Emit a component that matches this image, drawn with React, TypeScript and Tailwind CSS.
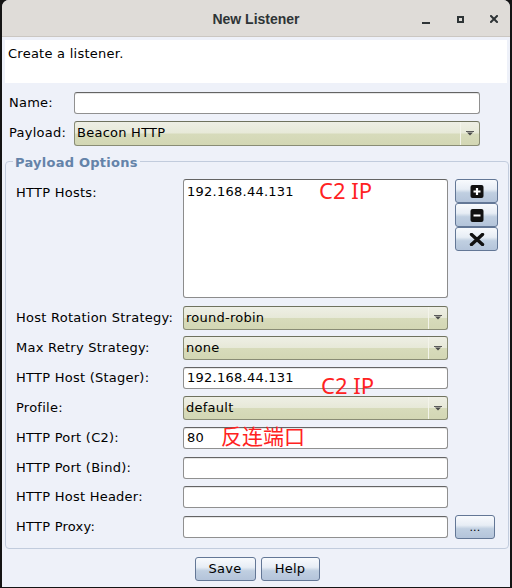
import React from "react";

const TXT = "font-['DejaVu_Sans',sans-serif] text-[13px] tracking-[0.25px] text-black";

function TextInput({ value = "", w }: { value?: string; w: string }) {
  return (
    <div
      className={`${w} h-[22px] bg-white border border-[#909090] border-t-[#646464] rounded-[3px] pl-[3px] flex items-center shadow-[inset_0_1px_0_#e6e6e6] ${TXT}`}
    >
      {value}
    </div>
  );
}

function Combo({ value, w, h = "h-[24px]" }: { value: string; w: string; h?: string }) {
  return (
    <div
      className={`${w} ${h} rounded-[3px] border border-[#898c75] border-t-[#6f725e] bg-[linear-gradient(to_bottom,#eeefe5_0%,#e7e9d8_48%,#d7dbbb_52%,#d3d7b4_100%)] flex items-stretch ${TXT}`}
    >
      <div className="flex-1 pl-[2px] flex items-center">{value}</div>
      <div className="w-[19px] border-l border-[#f3f4ea] flex items-center justify-center">
        <svg width="8" height="5" viewBox="0 0 8 5">
          <rect x="0" y="0" width="8" height="1" fill="#5a5a5a" />
          <path d="M1 1.5 L7 1.5 L4 4.5 Z" fill="#4a4a4a" />
        </svg>
      </div>
    </div>
  );
}

function Btn({ children, w, h = "h-[24px]" }: { children: React.ReactNode; w: string; h?: string }) {
  return (
    <div
      className={`${w} ${h} rounded-[3px] border border-[#637796] bg-[linear-gradient(to_bottom,#f8fafd_0%,#e7edf5_42%,#c0cfe1_58%,#b4c4da_100%)] flex items-center justify-center ${TXT}`}
    >
      {children}
    </div>
  );
}

const rows: { label: string; kind: "combo" | "input"; value: string; h: string }[] = [
  { label: "Host Rotation Strategy:", kind: "combo", value: "round-robin", h: "h-[31px]" },
  { label: "Max Retry Strategy:", kind: "combo", value: "none", h: "h-[30px]" },
  { label: "HTTP Host (Stager):", kind: "input", value: "192.168.44.131", h: "h-[30px]" },
  { label: "Profile:", kind: "combo", value: "default", h: "h-[30px]" },
  { label: "HTTP Port (C2):", kind: "input", value: "80", h: "h-[30px]" },
  { label: "HTTP Port (Bind):", kind: "input", value: "", h: "h-[29px]" },
  { label: "HTTP Host Header:", kind: "input", value: "", h: "h-[30px]" },
];

export default function App() {
  return (
    <div className="relative w-[512px] h-[588px] bg-[#141414] overflow-hidden">
      <div className="ml-[2px] w-[508px] h-[587px] flex flex-col rounded-t-[7px] overflow-hidden bg-[#eef1f9]">
        {/* title bar */}
        <div className="h-[37px] shrink-0 bg-[#dfdcd8] border-b border-[#cbc7c2] grid grid-cols-[1fr_auto_1fr] items-center">
          <div />
          <div className="font-['Liberation_Sans',sans-serif] font-bold text-[14px] text-[#2e3436] pt-[3px]">
            New Listener
          </div>
          <div className="flex items-center justify-end pr-[12px] pt-[2px]">
            <div className="w-[8px] h-[2px] bg-[#2e3436] mt-[7px]" />
            <div className="ml-[27px] w-[7px] h-[7px] border-2 border-[#2e3436]" />
            <svg className="ml-[26px]" width="8" height="8" viewBox="0 0 8 8">
              <path d="M1 1 L7 7 M7 1 L1 7" stroke="#2e3436" strokeWidth="2" strokeLinecap="square" />
            </svg>
          </div>
        </div>

        {/* body */}
        <div className="flex flex-col pl-[3px] pr-[1px]">
          <div className={`mt-[3px] mr-[2px] h-[43px] bg-white pl-[3px] pt-[4px] ${TXT}`}>Create a listener.</div>

          <div className="mt-[8px] h-[24px] flex items-center">
            <div className={`ml-[4px] w-[65px] ${TXT}`}>Name:</div>
            <TextInput w="w-[406px]" />
          </div>
          <div className="mt-[5px] h-[26px] flex items-center">
            <div className={`ml-[4px] w-[65px] ${TXT}`}>Payload:</div>
            <Combo w="w-[406px]" h="h-[25px]" value="Beacon HTTP" />
          </div>

          {/* group */}
          <div className="relative mt-[15px] border border-[#c2ccdd] rounded-[4px] pl-[10px] pt-[17px] pb-[7px]">
            <div className="absolute left-[7px] top-[-9px] px-[2px] bg-[#eef1f9] font-['DejaVu_Sans',sans-serif] font-bold text-[13px] tracking-[0.25px] text-[#6483a9]">
              Payload Options
            </div>

            <div className="flex items-start h-[119px]">
              <div className={`w-[167px] pt-[4px] ${TXT}`}>HTTP Hosts:</div>
              <div className={`w-[265px] h-[119px] bg-white border border-[#8c8c8c] border-t-[#646464] rounded-[3px] pl-[3px] pt-[2px] ${TXT}`}>
                192.168.44.131
              </div>
              <div className="ml-[7px] flex flex-col">
                <Btn w="w-[43px]">
                  <svg width="14" height="13" viewBox="0 0 14 13">
                    <rect x="0.5" y="0" width="13" height="13" rx="2" fill="#111" />
                    <path d="M7 3 V10 M3.5 6.5 H10.5" stroke="#fff" strokeWidth="2.2" />
                  </svg>
                </Btn>
                <Btn w="w-[43px]">
                  <svg width="14" height="13" viewBox="0 0 14 13">
                    <rect x="0.5" y="0" width="13" height="13" rx="2" fill="#111" />
                    <path d="M3.5 6.5 H10.5" stroke="#fff" strokeWidth="2.2" />
                  </svg>
                </Btn>
                <Btn w="w-[43px]">
                  <svg width="16" height="13" viewBox="0 0 16 13">
                    <path d="M2.5 1.5 L13.5 11.5 M13.5 1.5 L2.5 11.5" stroke="#111" strokeWidth="3.4" strokeLinecap="round" />
                  </svg>
                </Btn>
              </div>
            </div>

            <div className="mt-[4px] flex flex-col">
              {rows.map((r) => (
                <div key={r.label} className={`${r.h} flex items-center`}>
                  <div className={`w-[167px] ${TXT}`}>{r.label}</div>
                  {r.kind === "combo" ? (
                    <Combo w="w-[265px]" value={r.value} />
                  ) : (
                    <TextInput w="w-[265px]" value={r.value} />
                  )}
                </div>
              ))}
              <div className="h-[29px] flex items-center">
                <div className={`w-[167px] ${TXT}`}>HTTP Proxy:</div>
                <TextInput w="w-[265px]" />
                <div className="ml-[7px]">
                  <Btn w="w-[40px]">
                    <span className="text-[11px] leading-none pt-[2px]">...</span>
                  </Btn>
                </div>
              </div>
            </div>
          </div>

          <div className="mt-[8px] flex justify-center gap-[5px]">
            <Btn w="w-[61px]">Save</Btn>
            <Btn w="w-[59px]">Help</Btn>
          </div>
        </div>
      </div>

      {/* red annotations */}
      <div className="absolute left-[319px] top-[179px] font-['Noto_Sans','Noto_Sans_CJK_SC',sans-serif] text-[22px] leading-none text-[#ff2222]">
        C2 IP
      </div>
      <div className="absolute left-[321px] top-[374px] font-['Noto_Sans','Noto_Sans_CJK_SC',sans-serif] text-[22px] leading-none text-[#ff2222]">
        C2 IP
      </div>
      <div className="absolute left-[221px] top-[425px] font-['Noto_Sans_CJK_SC',sans-serif] text-[21px] leading-none text-[#ff2222]">
        反连端口
      </div>
    </div>
  );
}
